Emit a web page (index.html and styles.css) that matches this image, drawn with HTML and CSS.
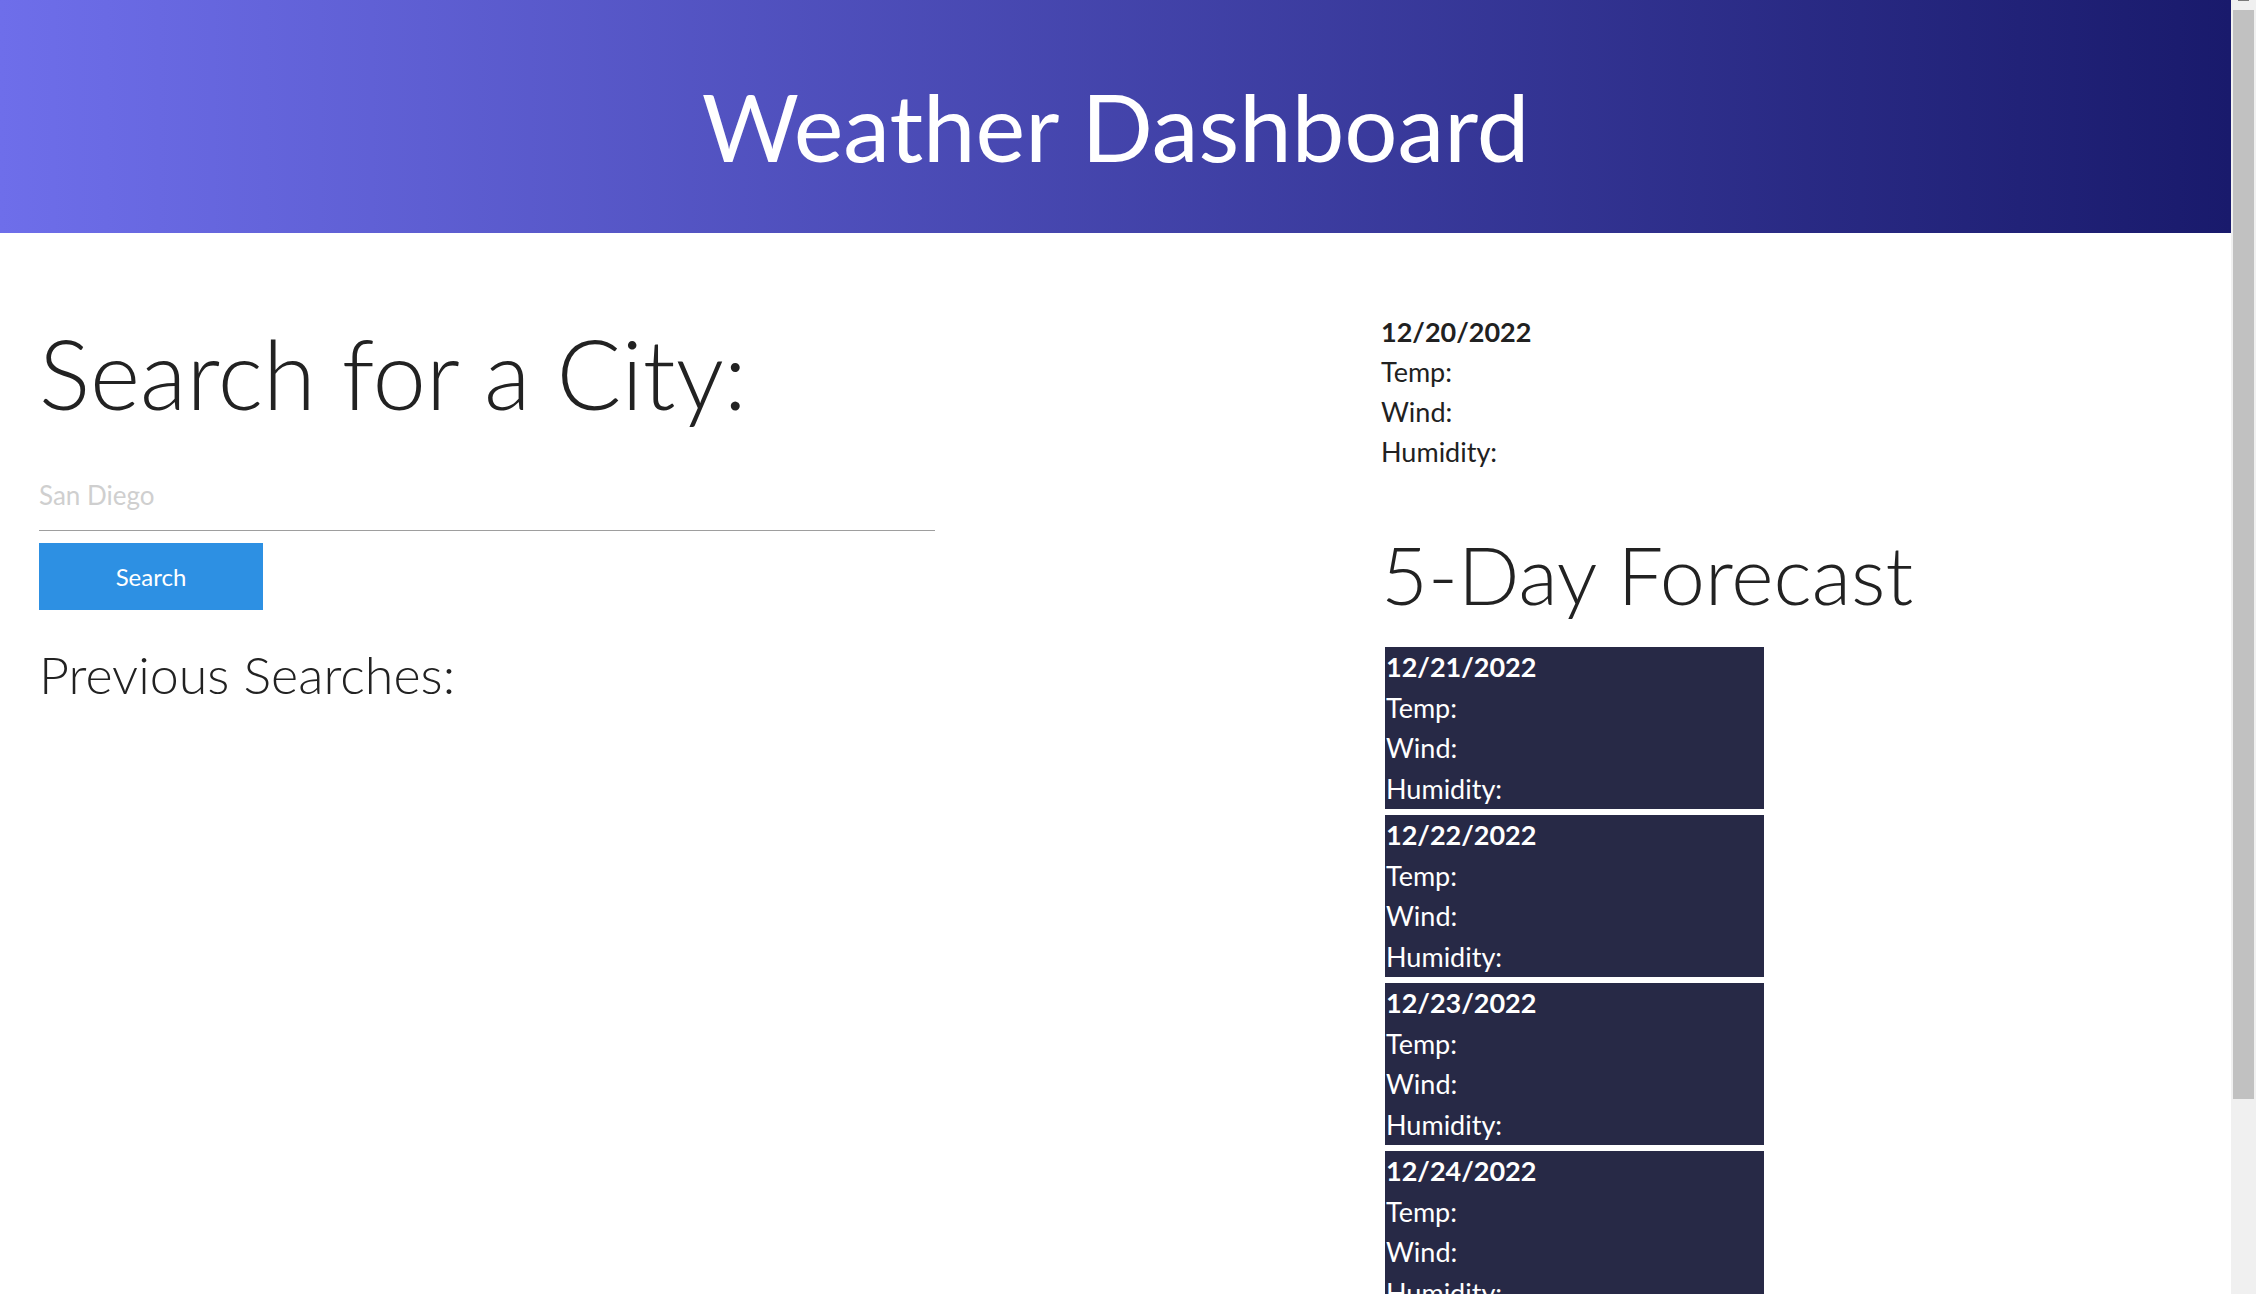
FILE: index.html
```html
<!DOCTYPE html>
<html lang="en">
<head>
<meta charset="utf-8">
<title>Weather Dashboard</title>
<link rel="stylesheet" href="styles.css">
</head>
<body>
<div class="page">
<header class="hero">
  <h1 class="hero-title">Weather Dashboard</h1>
</header>
<main class="layout">
  <section class="search-col">
    <h2 class="search-title">Search for a City:</h2>
    <input class="city-input" type="text" placeholder="San Diego">
    <button class="search-btn" type="button">Search</button>
    <h3 class="prev-title">Previous Searches:</h3>
  </section>
  <section class="weather-col">
    <div class="today">
      <p class="date">12/20/2022</p>
      <p>Temp:</p>
      <p>Wind:</p>
      <p>Humidity:</p>
    </div>
    <h2 class="forecast-title">5-Day Forecast</h2>
    <div class="cards">
      <div class="card">
        <p class="date">12/21/2022</p>
        <p>Temp:</p>
        <p>Wind:</p>
        <p>Humidity:</p>
      </div>
      <div class="card">
        <p class="date">12/22/2022</p>
        <p>Temp:</p>
        <p>Wind:</p>
        <p>Humidity:</p>
      </div>
      <div class="card">
        <p class="date">12/23/2022</p>
        <p>Temp:</p>
        <p>Wind:</p>
        <p>Humidity:</p>
      </div>
      <div class="card">
        <p class="date">12/24/2022</p>
        <p>Temp:</p>
        <p>Wind:</p>
        <p>Humidity:</p>
      </div>
      <div class="card">
        <p class="date">12/25/2022</p>
        <p>Temp:</p>
        <p>Wind:</p>
        <p>Humidity:</p>
      </div>
    </div>
  </section>
</main>
</div>
<div class="scrollbar" aria-hidden="true">
  <div class="scroll-arrow"></div>
  <div class="scroll-thumb"></div>
</div>
</body>
</html>
```

FILE: styles.css
```css
html, body {
  height: 100%;
  overflow: hidden;
}
body {
  margin: 0;
  display: flex;
  font-family: "Lato", "Open Sans", sans-serif;
  font-size: 27px;
  color: #212121;
  background: #ffffff;
}
.page {
  flex: 1;
  min-width: 0;
  height: 100vh;
  overflow: hidden;
}
.scrollbar {
  width: 25px;
  flex: none;
  height: 100vh;
  background: #f0f0f0;
  display: flex;
  flex-direction: column;
}
.scroll-arrow {
  width: 11px;
  height: 1px;
  margin-left: 7px;
  background: #7a7a7a;
}
.scroll-thumb {
  margin: 9px 2px 0;
  height: 1089px;
  background: #c1c1c1;
}
p, h1, h2, h3 {
  margin: 0;
}
.hero {
  background: linear-gradient(to right, #6e6eea, #191a6c);
  padding: 68px 0 50px;
  text-align: center;
}
.hero-title {
  color: #ffffff;
  font-weight: 400;
  font-size: 94px;
  line-height: 115px;
}
.layout {
  display: grid;
  grid-template-columns: 1342px 1fr;
  padding: 0 0 40px 39px;
}
.search-col {
  padding-top: 82px;
  display: flex;
  flex-direction: column;
  align-items: flex-start;
}
.search-title {
  font-size: 96px;
  font-weight: 300;
  line-height: 115px;
  color: #222222;
}
.city-input {
  margin-top: 30px;
  width: 896px;
  height: 70px;
  padding: 0;
  border: none;
  border-bottom: 1px solid #9e9e9e;
  outline: none;
  font-family: inherit;
  font-size: 26px;
  background: transparent;
  box-sizing: content-box;
}
.city-input::placeholder {
  color: #cfcfcf;
}
.search-btn {
  margin-top: 12px;
  width: 224px;
  height: 67px;
  border: none;
  background: #2d90e3;
  color: #ffffff;
  font-family: inherit;
  font-size: 24px;
}
.prev-title {
  margin-top: 33px;
  font-size: 52px;
  font-weight: 300;
  line-height: 62px;
  color: #222222;
}
.weather-col {
  padding-top: 79px;
}
.today p {
  line-height: 40px;
}
.date {
  font-weight: 700;
}
.forecast-title {
  margin-top: 53px;
  font-size: 81px;
  font-weight: 300;
  line-height: 97px;
  color: #222222;
}
.cards {
  margin-top: 25px;
  margin-left: 4px;
  display: flex;
  flex-direction: column;
  gap: 6px;
}
.card {
  width: 379px;
  background: #272946;
  color: #ffffff;
  padding-left: 1px;
  box-sizing: border-box;
}
.card p {
  line-height: 40.5px;
}
```
